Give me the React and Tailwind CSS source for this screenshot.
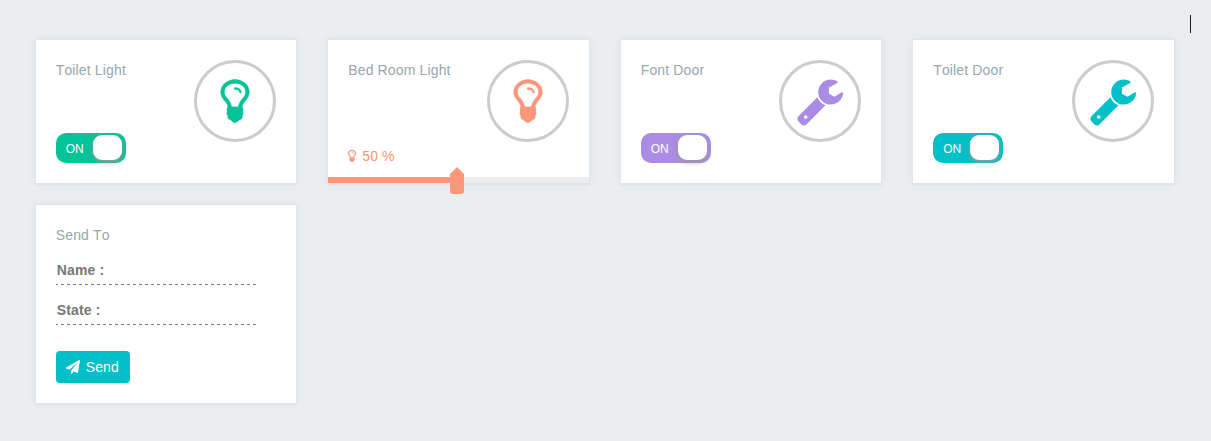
import React from "react";

const BULB =
  "M1120 576q0 13-9.5 22.5t-22.5 9.5-22.5-9.5-9.5-22.5q0-46-54-71t-106-25q-13 0-22.5-9.5t-9.5-22.5 9.5-22.5 22.5-9.5q50 0 99.5 16t87 54 37.5 90zm160 0q0-72-34.5-134t-90-101.5-123-62-136.5-22.5-136.5 22.5-123 62-90 101.5-34.5 134q0 101 68 180 10 11 30.5 33t30.5 33q128 153 141 298h228q13-145 141-298 10-11 30.5-33t30.5-33q68-79 68-180zm128 0q0 155-103 268-45 49-74.5 87t-59.5 95.5-34 107.5q47 28 47 82 0 37-25 64 25 27 25 64 0 52-45 81 13 23 13 47 0 46-31.5 71t-77.5 25q-20 44-60 70t-87 26-87-26-60-70q-46 0-77.5-25t-31.5-71q0-24 13-47-45-29-45-81 0-37 25-64-25-27-25-64 0-54 47-82-4-50-34-107.5t-59.5-95.5-74.5-87q-103-113-103-268 0-99 44.5-184.5t117-142 164-89 186.5-32.5 186.5 32.5 164 89 117 142 44.5 184.5z";
const BULB_BASE = "M630 1110h532v270l-50 120H680l-50-120z";
const WRENCH =
  "M448 1472q0-26-19-45t-45-19-45 19-19 45 19 45 45 19 45-19 19-45zm644-420l-682 682q-37 37-90 37-52 0-91-37l-106-108q-38-36-38-90 0-53 38-91l681-681q39 98 114.5 173.5t173.5 114.5zm634-435q0 39-23 106-47 134-164.5 217.5t-258.5 83.5q-185 0-316.5-131.5t-131.5-316.5 131.5-316.5 316.5-131.5q58 0 121.5 16.5t107.5 46.5q16 11 16 28t-16 28l-293 169v224l193 107q5-3 79-48.5t135.5-81 70.5-35.5q15 0 23.5 10t8.5 25z";
const PLANE =
  "M1764 11q33 24 27 64l-256 1536q-5 29-32 45-14 8-31 8-11 0-24-5l-453-185-242 295q-18 23-49 23-13 0-22-4-19-7-30.5-23.5t-11.5-36.5v-349l864-1059-1069 925-395-162q-37-14-40-55-2-40 32-59l1664-960q15-9 32-9 20 0 36 11z";

function Icon({ d, className }) {
  return (
    <svg viewBox="0 0 1792 1792" fill="currentColor" className={className}>
      <path d={d} />
      {d === BULB && <path d={BULB_BASE} />}
    </svg>
  );
}

function Card({ className = "", children }) {
  return (
    <section
      className={`bg-white px-5 shadow-[0_0_0_1px_#e0e5ea,0_1px_0_1px_#dfe4ea,0_0_10px_rgba(0,0,0,0.07)] ${className}`}
    >
      {children}
    </section>
  );
}

function Title({ children }) {
  return <h2 className="pt-5 text-sm leading-5 tracking-[0.14px] text-[#98a6ad]">{children}</h2>;
}

function Badge({ icon }) {
  return (
    <div className="mt-5 flex size-[82px] shrink-0 items-center justify-center rounded-full border-3 border-[#ccc]">
      <Icon
        d={icon}
        className={`-mt-px size-[50px] stroke-current ${icon === BULB ? "stroke-[20]" : "stroke-0"}`}
      />
    </div>
  );
}

function Toggle({ color }) {
  return (
    <button
      className={`flex h-[30px] w-[70px] items-center justify-between rounded-[10px] pr-1 pl-2.5 ${color}`}
    >
      <span className="pt-px text-xs text-white">ON</span>
      <span className="-mt-px h-[25px] w-[29px] rounded-[9px] bg-white shadow-[0_2px_5px_#999]" />
    </button>
  );
}

function Device({ title, icon, text, bg }) {
  return (
    <Card className={`flex h-[143px] justify-between ${text}`}>
      <div className="flex flex-col justify-between pb-5">
        <Title>{title}</Title>
        <Toggle color={bg} />
      </div>
      <Badge icon={icon} />
    </Card>
  );
}

function Dimmer({ title, value }) {
  return (
    <Card className="flex h-[143px] flex-col text-[#fc9679]">
      <div className="flex h-[137px] shrink-0 justify-between">
        <div className="flex flex-col justify-between pb-[11px]">
          <Title>{title}</Title>
          <p className="flex items-center text-sm leading-5">
            <Icon d={BULB} className="-ml-[3px] size-3.5 stroke-current stroke-[30]" />
            <span className="ml-[3px] tracking-[0.1px]">{value} %</span>
          </p>
        </div>
        <Badge icon={BULB} />
      </div>
      <div className="relative -mx-5 h-1.5 bg-[#ededed]">
        <div className="h-full bg-[#fc9679]" style={{ width: `${value}%` }} />
        <svg
          viewBox="0 0 14 27"
          className="absolute -top-2.5 -ml-[8.5px] h-[27px] w-3.5"
          style={{ left: `${value}%` }}
          fill="currentColor"
        >
          <path d="M7 0l7 7v17a3 3 0 0 1-3 3H3a3 3 0 0 1-3-3V7z" />
        </svg>
      </div>
    </Card>
  );
}

function Field({ label }) {
  return (
    <div className="w-[200px]">
      <div className="flex h-[29px] items-center pl-px text-sm font-bold tracking-[0.14px] text-[#777]">
        {label}
      </div>
      <div className="h-px bg-[repeating-linear-gradient(90deg,#777_0_2px,transparent_2px_5px,#777_5px_6px)]" />
    </div>
  );
}

export default function App() {
  return (
    <main className="h-[441px] overflow-hidden bg-[#eaeef1] pl-[35.75px] font-['Liberation_Sans',Arial,sans-serif] [font-kerning:none]">
      <div className="flex h-10 w-[1155.25px] justify-end pt-[15px]">
        <span className="h-[18px] w-px bg-[#222]" />
      </div>
      <div className="grid w-[1138px] grid-cols-4 gap-x-8 gap-y-[22px]">
        <Device title="Toilet Light" icon={BULB} text="text-[#04c397]" bg="bg-[#04c397]" />
        <Dimmer title="Bed Room Light" value={50} />
        <Device title="Font Door" icon={WRENCH} text="text-[#ab8ce4]" bg="bg-[#ab8ce4]" />
        <Device title="Toilet Door" icon={WRENCH} text="text-[#01c0c8]" bg="bg-[#01c0c8]" />
        <Card className="h-[198px]">
          <Title>Send To</Title>
          <div className="mt-2.5 flex flex-col gap-2.5">
            <Field label="Name :" />
            <Field label="State :" />
          </div>
          <button className="mt-[26px] flex h-8 w-[74px] items-center gap-1.5 rounded-[4px] bg-[#01c0c8] pl-2.5 text-sm tracking-[0.1px] text-white">
            <Icon d={PLANE} className="size-3.5" />
            Send
          </button>
        </Card>
      </div>
    </main>
  );
}
